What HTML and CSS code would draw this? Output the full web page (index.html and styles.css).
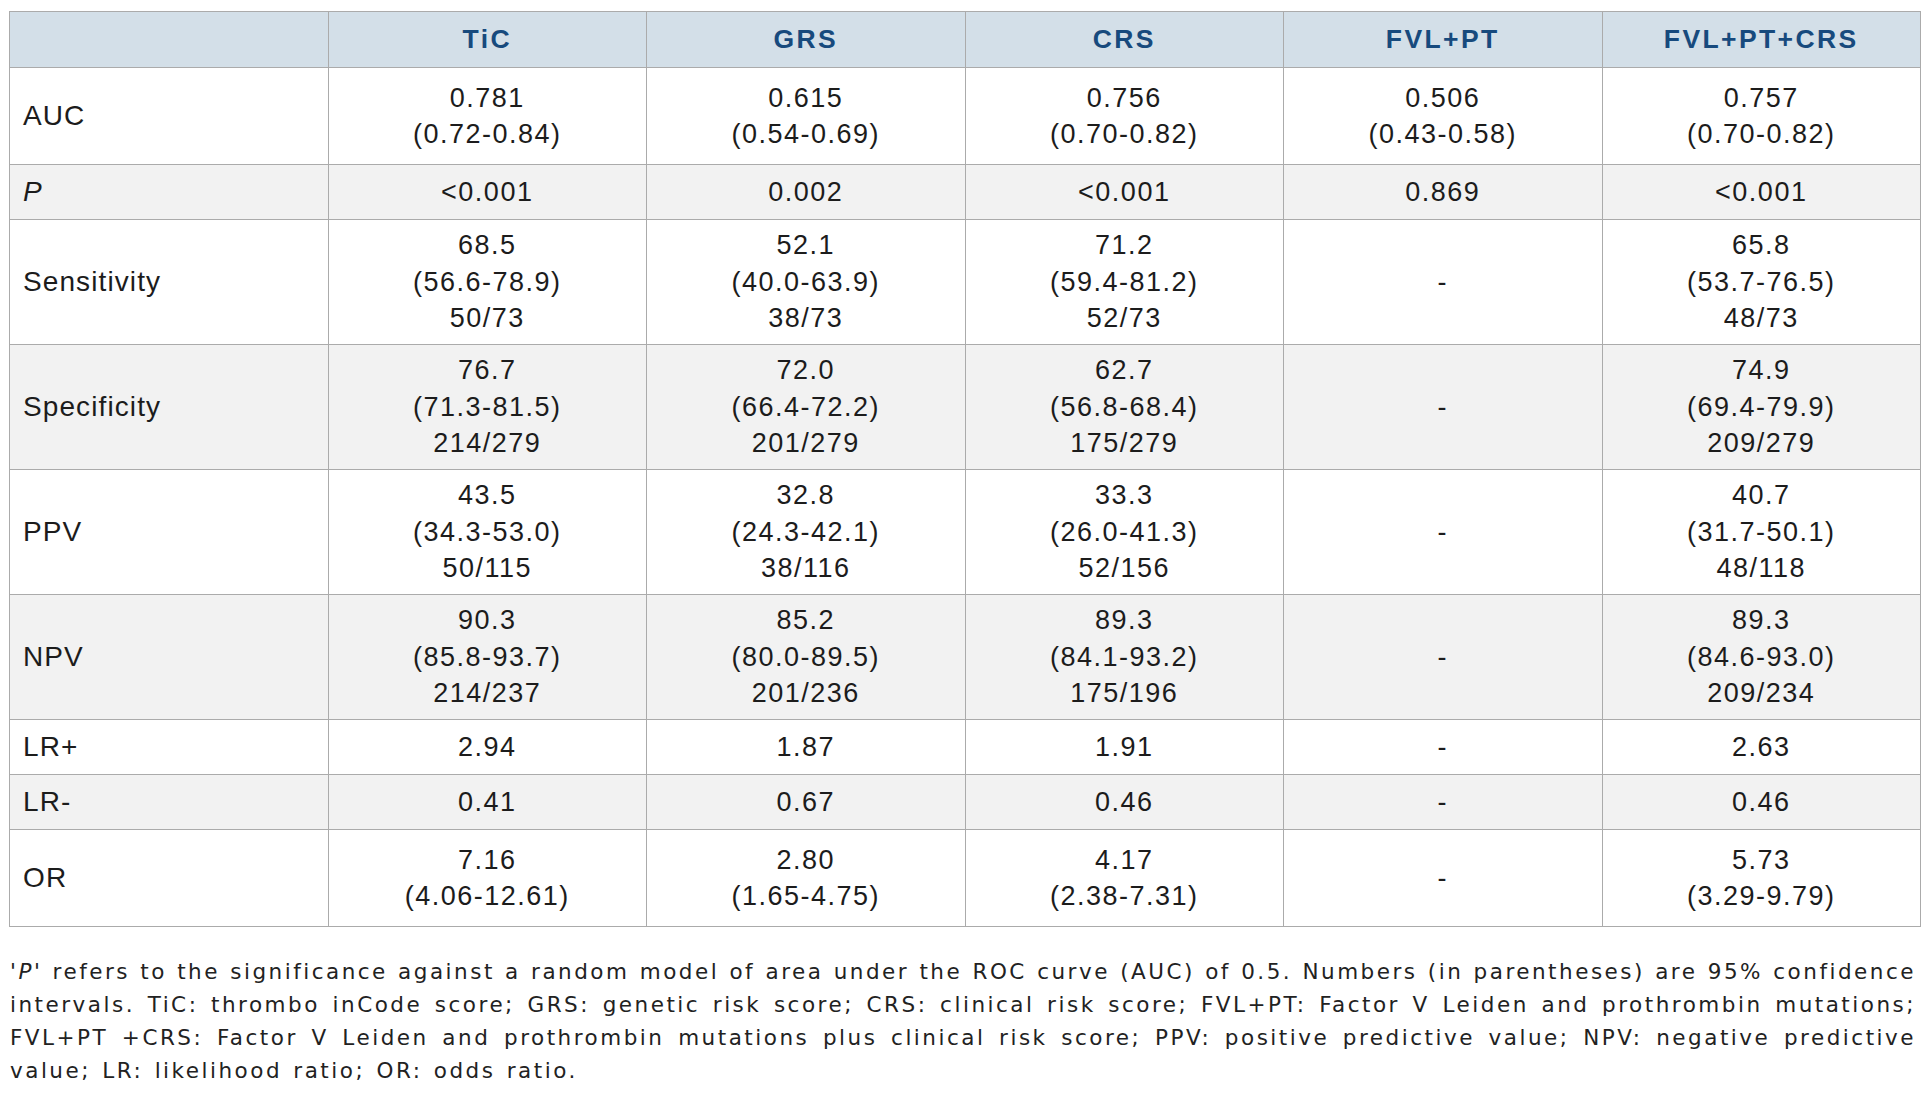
FILE: index.html
```html
<!DOCTYPE html>
<html lang="en">
<head>
<meta charset="utf-8">
<title>Diagnostic performance</title>
<link rel="stylesheet" href="styles.css">
</head>
<body>
<div class="page">
  <table class="results">
    <thead>
      <tr class="head">
        <th></th>
        <th>TiC</th>
        <th>GRS</th>
        <th>CRS</th>
        <th>FVL+PT</th>
        <th>FVL+PT+CRS</th>
      </tr>
    </thead>
    <tbody>
      <tr class="two">
        <td class="label">AUC</td>
        <td>0.781<br>(0.72-0.84)</td>
        <td>0.615<br>(0.54-0.69)</td>
        <td>0.756<br>(0.70-0.82)</td>
        <td>0.506<br>(0.43-0.58)</td>
        <td>0.757<br>(0.70-0.82)</td>
      </tr>
      <tr class="one alt">
        <td class="label"><i>P</i></td>
        <td>&lt;0.001</td>
        <td>0.002</td>
        <td>&lt;0.001</td>
        <td>0.869</td>
        <td>&lt;0.001</td>
      </tr>
      <tr class="three">
        <td class="label">Sensitivity</td>
        <td>68.5<br>(56.6-78.9)<br>50/73</td>
        <td>52.1<br>(40.0-63.9)<br>38/73</td>
        <td>71.2<br>(59.4-81.2)<br>52/73</td>
        <td>-</td>
        <td>65.8<br>(53.7-76.5)<br>48/73</td>
      </tr>
      <tr class="three alt">
        <td class="label">Specificity</td>
        <td>76.7<br>(71.3-81.5)<br>214/279</td>
        <td>72.0<br>(66.4-72.2)<br>201/279</td>
        <td>62.7<br>(56.8-68.4)<br>175/279</td>
        <td>-</td>
        <td>74.9<br>(69.4-79.9)<br>209/279</td>
      </tr>
      <tr class="three">
        <td class="label">PPV</td>
        <td>43.5<br>(34.3-53.0)<br>50/115</td>
        <td>32.8<br>(24.3-42.1)<br>38/116</td>
        <td>33.3<br>(26.0-41.3)<br>52/156</td>
        <td>-</td>
        <td>40.7<br>(31.7-50.1)<br>48/118</td>
      </tr>
      <tr class="three alt">
        <td class="label">NPV</td>
        <td>90.3<br>(85.8-93.7)<br>214/237</td>
        <td>85.2<br>(80.0-89.5)<br>201/236</td>
        <td>89.3<br>(84.1-93.2)<br>175/196</td>
        <td>-</td>
        <td>89.3<br>(84.6-93.0)<br>209/234</td>
      </tr>
      <tr class="one">
        <td class="label">LR+</td>
        <td>2.94</td>
        <td>1.87</td>
        <td>1.91</td>
        <td>-</td>
        <td>2.63</td>
      </tr>
      <tr class="one alt">
        <td class="label">LR-</td>
        <td>0.41</td>
        <td>0.67</td>
        <td>0.46</td>
        <td>-</td>
        <td>0.46</td>
      </tr>
      <tr class="two">
        <td class="label">OR</td>
        <td>7.16<br>(4.06-12.61)</td>
        <td>2.80<br>(1.65-4.75)</td>
        <td>4.17<br>(2.38-7.31)</td>
        <td>-</td>
        <td>5.73<br>(3.29-9.79)</td>
      </tr>
    </tbody>
  </table>
  <p class="note">
    <span class="line full">'<i>P</i>' refers to the significance against a random model of area under the ROC curve (AUC) of 0.5. Numbers (in parentheses) are 95% confidence</span>
    <span class="line full">intervals. TiC: thrombo inCode score; GRS: genetic risk score; CRS: clinical risk score; FVL+PT: Factor V Leiden and prothrombin mutations;</span>
    <span class="line full">FVL+PT +CRS: Factor V Leiden and prothrombin mutations plus clinical risk score; PPV: positive predictive value; NPV: negative predictive</span>
    <span class="line last">value; LR: likelihood ratio; OR: odds ratio.</span>
  </p>
</div>
</body>
</html>
```
FILE: styles.css
```css
html, body {
  margin: 0;
  padding: 0;
  background: #ffffff;
}

.page {
  padding: 11px 7px 0 9px;
}

.results {
  width: 100%;
  table-layout: fixed;
  border-collapse: collapse;
  font-family: "Liberation Sans", Arial, sans-serif;
  color: #1c1c1c;
}

.results th,
.results td {
  border: 1px solid #ababab;
  padding: 0 8px;
  text-align: center;
  vertical-align: middle;
}

.head {
  height: 56px;
  background: #d3dfe8;
}

.head th {
  font-size: 26.5px;
  font-weight: bold;
  letter-spacing: 2.4px;
  color: #174a7d;
}

.results td {
  font-size: 27px;
  letter-spacing: 1.5px;
  line-height: 36.5px;
}

.results td.label {
  text-align: left;
  padding-left: 13px;
  font-size: 28px;
  letter-spacing: 1.1px;
}

.one { height: 55px; }
.two { height: 97px; }
.three { height: 125px; }

.alt { background: #f2f2f2; }

.note {
  margin: 28px 5px 0 1px;
  font-family: "DejaVu Sans", "Open Sans", sans-serif;
  font-size: 21.5px;
  letter-spacing: 2.5px;
  line-height: 33px;
  color: #222222;
}

.note .line {
  display: block;
  white-space: nowrap;
  text-align: left;
}

.note .line.full {
  text-align: justify;
  text-align-last: justify;
}

.note .line.last {
  word-spacing: 2px;
}
```
